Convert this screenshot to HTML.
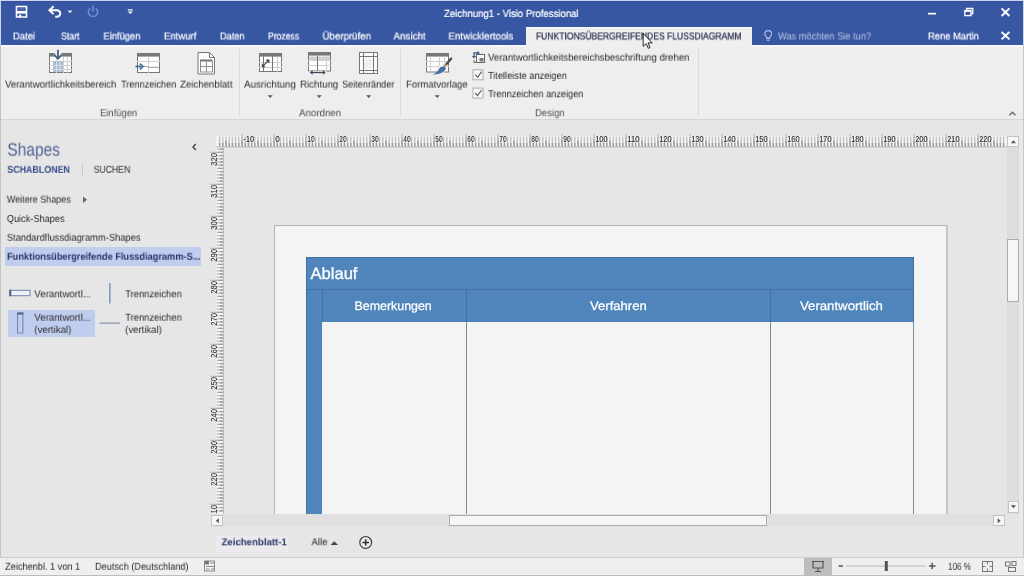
<!DOCTYPE html>
<html lang="de"><head><meta charset="utf-8"><title>Zeichnung1 - Visio Professional</title>
<style>
html,body{margin:0;padding:0}
body{width:1024px;height:576px;overflow:hidden;background:#e6e6e6;font-family:"Liberation Sans",sans-serif;position:relative}
.abs,.t,.b{position:absolute}
.t{white-space:nowrap;display:block;transform-origin:0 0;text-rendering:geometricPrecision;will-change:transform}
svg{display:block;overflow:visible}
</style></head>
<body>
<div class="b" style="left:0px;top:0px;width:1024px;height:45px;background:#3857a3;"></div>
<div class="b" style="left:0px;top:1px;width:1024px;height:1px;background:#3a4f9a;"></div>
<div class="b" style="left:0px;top:0px;width:1024px;height:1px;background:#cdd3f3;"></div>
<div class="b" style="left:0px;top:0px;width:1px;height:45px;background:#cdd3f3;"></div>
<div class="b" style="left:1023px;top:0px;width:1px;height:45px;background:#cdd3f3;"></div>
<div class="b" style="left:0px;top:45px;width:1024px;height:74px;background:#eeeeee;"></div>
<div class="b" style="left:0px;top:45px;width:1024px;height:1.5px;background:#f6f8fb;"></div>
<div class="b" style="left:0px;top:119px;width:1024px;height:1px;background:#d6d6d6;"></div>
<div class="b" style="left:526px;top:26.5px;width:226px;height:20.5px;background:#efefef;"></div>
<div class="b" style="left:526px;top:26.5px;width:226px;height:1px;background:#f7f8fb;"></div>
<div class="b" style="left:239px;top:49px;width:1px;height:66px;background:#d9d9d9;"></div>
<div class="b" style="left:400px;top:49px;width:1px;height:66px;background:#d9d9d9;"></div>
<div class="b" style="left:698px;top:49px;width:1px;height:66px;background:#d9d9d9;"></div>
<div class="b" style="left:0px;top:45px;width:1px;height:531px;background:#c4c4c4;"></div>
<div class="b" style="left:1023px;top:45px;width:1px;height:531px;background:#c8c8c8;"></div>
<div class="b" style="left:1019px;top:120px;width:4px;height:438px;background:#e9e9e9;"></div>
<div class="b" style="left:5px;top:247.3px;width:196px;height:18.7px;background:#c0cdee;"></div>
<div class="b" style="left:7.5px;top:310.4px;width:87.5px;height:26.2px;background:#c0cdee;"></div>
<div class="b" style="left:274px;top:225px;width:673.6px;height:289px;background:#c6c6c6;"></div>
<div class="b" style="left:273.5px;top:225px;width:672.6px;height:289px;background:#f4f4f4;border-left:1px solid #b6b6b6;border-top:1px solid #b2b2b2;box-sizing:border-box;"></div>
<div class="b" style="left:306px;top:257.4px;width:608px;height:64.8px;background:#4f85bb;"></div>
<div class="b" style="left:306px;top:257.4px;width:608px;height:1px;background:#45709d;"></div>
<div class="b" style="left:306px;top:289.2px;width:608px;height:1px;background:#45709d;"></div>
<div class="b" style="left:306px;top:322px;width:16px;height:192px;background:#4f85bb;"></div>
<div class="b" style="left:306px;top:257.4px;width:1px;height:256.6px;background:#45709d;"></div>
<div class="b" style="left:322px;top:290px;width:1px;height:31.7px;background:#45709d;"></div>
<div class="b" style="left:466px;top:290px;width:1px;height:31.7px;background:#45709d;"></div>
<div class="b" style="left:770px;top:290px;width:1px;height:31.7px;background:#45709d;"></div>
<div class="b" style="left:913px;top:257.4px;width:1px;height:64.3px;background:#45709d;"></div>
<div class="b" style="left:465.8px;top:322px;width:1.5px;height:192px;background:#808c98;"></div>
<div class="b" style="left:769.8px;top:322px;width:1.5px;height:192px;background:#808c98;"></div>
<div class="b" style="left:912.6px;top:322px;width:1.5px;height:192px;background:#808c98;"></div>
<div class="b" style="left:211px;top:514px;width:794px;height:13px;background:#e0e0e0;"></div>
<div class="b" style="left:449px;top:515px;width:318px;height:11px;background:#f6f6f6;border:1px solid #ababab;box-sizing:border-box;"></div>
<div class="b" style="left:211px;top:515px;width:12px;height:11px;background:#f6f6f6;border:1px solid #c4c4c4;box-sizing:border-box;"></div>
<div class="b" style="left:993px;top:515px;width:12px;height:11px;background:#f6f6f6;border:1px solid #c4c4c4;box-sizing:border-box;"></div>
<div class="b" style="left:1007px;top:147px;width:12px;height:367px;background:#dddddd;"></div>
<div class="b" style="left:1007px;top:239px;width:12px;height:63px;background:#f6f6f6;border:1px solid #ababab;box-sizing:border-box;"></div>
<div class="b" style="left:1007px;top:136px;width:12px;height:11px;background:#f8f8f8;border:1px solid #c4c4c4;box-sizing:border-box;"></div>
<div class="b" style="left:1008px;top:501px;width:11px;height:12px;background:#f6f6f6;border:1px solid #c4c4c4;box-sizing:border-box;"></div>
<div class="b" style="left:1px;top:527px;width:1018px;height:30px;background:#e6e6e6;"></div>
<div class="b" style="left:216px;top:536px;width:72px;height:15.5px;background:#ebebee;"></div>
<div class="b" style="left:0px;top:557px;width:1024px;height:1px;background:#cdcdcd;"></div>
<div class="b" style="left:0px;top:558px;width:1024px;height:18px;background:#efefef;"></div>
<div class="b" style="left:804px;top:558px;width:28px;height:18px;background:#bdbdbd;"></div>
<div class="b" style="left:0px;top:575px;width:1024px;height:1px;background:#bdbdbd;"></div>
<svg class="abs" style="left:0;top:0;overflow:hidden;will-change:transform" width="1024" height="514" viewBox="0 0 1024 514" font-family="Liberation Sans, sans-serif"><rect x="216" y="136" width="791" height="11" fill="#f4f4f4"/><rect x="216" y="147" width="7.5" height="367" fill="#f4f4f4"/><path d="M219.6 147v-10.5 M222.8 147v-10.5 M226.0 147v-10.5 M229.2 147v-10.5 M232.4 147v-10.5 M235.6 147v-10.5 M238.8 147v-10.5 M242.0 147v-10.5 M245.2 147v-10.5 M248.4 147v-10.5 M251.6 147v-10.5 M254.8 147v-10.5 M258.0 147v-10.5 M261.2 147v-10.5 M264.4 147v-10.5 M267.6 147v-10.5 M270.8 147v-10.5 M274.0 147v-10.5 M277.2 147v-10.5 M280.4 147v-10.5 M283.6 147v-10.5 M286.8 147v-10.5 M290.0 147v-10.5 M293.2 147v-10.5 M296.4 147v-10.5 M299.6 147v-10.5 M302.8 147v-10.5 M306.0 147v-10.5 M309.2 147v-10.5 M312.4 147v-10.5 M315.6 147v-10.5 M318.8 147v-10.5 M322.0 147v-10.5 M325.2 147v-10.5 M328.4 147v-10.5 M331.6 147v-10.5 M334.8 147v-10.5 M338.0 147v-10.5 M341.2 147v-10.5 M344.4 147v-10.5 M347.6 147v-10.5 M350.8 147v-10.5 M354.0 147v-10.5 M357.2 147v-10.5 M360.4 147v-10.5 M363.6 147v-10.5 M366.8 147v-10.5 M370.0 147v-10.5 M373.2 147v-10.5 M376.4 147v-10.5 M379.6 147v-10.5 M382.8 147v-10.5 M386.0 147v-10.5 M389.2 147v-10.5 M392.4 147v-10.5 M395.6 147v-10.5 M398.8 147v-10.5 M402.0 147v-10.5 M405.2 147v-10.5 M408.4 147v-10.5 M411.6 147v-10.5 M414.8 147v-10.5 M418.0 147v-10.5 M421.2 147v-10.5 M424.4 147v-10.5 M427.6 147v-10.5 M430.8 147v-10.5 M434.0 147v-10.5 M437.2 147v-10.5 M440.4 147v-10.5 M443.6 147v-10.5 M446.8 147v-10.5 M450.0 147v-10.5 M453.2 147v-10.5 M456.4 147v-10.5 M459.6 147v-10.5 M462.8 147v-10.5 M466.0 147v-10.5 M469.2 147v-10.5 M472.4 147v-10.5 M475.6 147v-10.5 M478.8 147v-10.5 M482.0 147v-10.5 M485.2 147v-10.5 M488.4 147v-10.5 M491.6 147v-10.5 M494.8 147v-10.5 M498.0 147v-10.5 M501.2 147v-10.5 M504.4 147v-10.5 M507.6 147v-10.5 M510.8 147v-10.5 M514.0 147v-10.5 M517.2 147v-10.5 M520.4 147v-10.5 M523.6 147v-10.5 M526.8 147v-10.5 M530.0 147v-10.5 M533.2 147v-10.5 M536.4 147v-10.5 M539.6 147v-10.5 M542.8 147v-10.5 M546.0 147v-10.5 M549.2 147v-10.5 M552.4 147v-10.5 M555.6 147v-10.5 M558.8 147v-10.5 M562.0 147v-10.5 M565.2 147v-10.5 M568.4 147v-10.5 M571.6 147v-10.5 M574.8 147v-10.5 M578.0 147v-10.5 M581.2 147v-10.5 M584.4 147v-10.5 M587.6 147v-10.5 M590.8 147v-10.5 M594.0 147v-10.5 M597.2 147v-10.5 M600.4 147v-10.5 M603.6 147v-10.5 M606.8 147v-10.5 M610.0 147v-10.5 M613.2 147v-10.5 M616.4 147v-10.5 M619.6 147v-10.5 M622.8 147v-10.5 M626.0 147v-10.5 M629.2 147v-10.5 M632.4 147v-10.5 M635.6 147v-10.5 M638.8 147v-10.5 M642.0 147v-10.5 M645.2 147v-10.5 M648.4 147v-10.5 M651.6 147v-10.5 M654.8 147v-10.5 M658.0 147v-10.5 M661.2 147v-10.5 M664.4 147v-10.5 M667.6 147v-10.5 M670.8 147v-10.5 M674.0 147v-10.5 M677.2 147v-10.5 M680.4 147v-10.5 M683.6 147v-10.5 M686.8 147v-10.5 M690.0 147v-10.5 M693.2 147v-10.5 M696.4 147v-10.5 M699.6 147v-10.5 M702.8 147v-10.5 M706.0 147v-10.5 M709.2 147v-10.5 M712.4 147v-10.5 M715.6 147v-10.5 M718.8 147v-10.5 M722.0 147v-10.5 M725.2 147v-10.5 M728.4 147v-10.5 M731.6 147v-10.5 M734.8 147v-10.5 M738.0 147v-10.5 M741.2 147v-10.5 M744.4 147v-10.5 M747.6 147v-10.5 M750.8 147v-10.5 M754.0 147v-10.5 M757.2 147v-10.5 M760.4 147v-10.5 M763.6 147v-10.5 M766.8 147v-10.5 M770.0 147v-10.5 M773.2 147v-10.5 M776.4 147v-10.5 M779.6 147v-10.5 M782.8 147v-10.5 M786.0 147v-10.5 M789.2 147v-10.5 M792.4 147v-10.5 M795.6 147v-10.5 M798.8 147v-10.5 M802.0 147v-10.5 M805.2 147v-10.5 M808.4 147v-10.5 M811.6 147v-10.5 M814.8 147v-10.5 M818.0 147v-10.5 M821.2 147v-10.5 M824.4 147v-10.5 M827.6 147v-10.5 M830.8 147v-10.5 M834.0 147v-10.5 M837.2 147v-10.5 M840.4 147v-10.5 M843.6 147v-10.5 M846.8 147v-10.5 M850.0 147v-10.5 M853.2 147v-10.5 M856.4 147v-10.5 M859.6 147v-10.5 M862.8 147v-10.5 M866.0 147v-10.5 M869.2 147v-10.5 M872.4 147v-10.5 M875.6 147v-10.5 M878.8 147v-10.5 M882.0 147v-10.5 M885.2 147v-10.5 M888.4 147v-10.5 M891.6 147v-10.5 M894.8 147v-10.5 M898.0 147v-10.5 M901.2 147v-10.5 M904.4 147v-10.5 M907.6 147v-10.5 M910.8 147v-10.5 M914.0 147v-10.5 M917.2 147v-10.5 M920.4 147v-10.5 M923.6 147v-10.5 M926.8 147v-10.5 M930.0 147v-10.5 M933.2 147v-10.5 M936.4 147v-10.5 M939.6 147v-10.5 M942.8 147v-10.5 M946.0 147v-10.5 M949.2 147v-10.5 M952.4 147v-10.5 M955.6 147v-10.5 M958.8 147v-10.5 M962.0 147v-10.5 M965.2 147v-10.5 M968.4 147v-10.5 M971.6 147v-10.5 M974.8 147v-10.5 M978.0 147v-10.5 M981.2 147v-10.5 M984.4 147v-10.5 M987.6 147v-10.5 M990.8 147v-10.5 M994.0 147v-10.5 M997.2 147v-10.5 M1000.4 147v-10.5 M1003.6 147v-10.5" stroke="#c4c4c4" stroke-width="1.4" fill="none"/><path d="M219.6 147v-4 M222.8 147v-4 M226.0 147v-6 M229.2 147v-4 M232.4 147v-4 M235.6 147v-4 M238.8 147v-4 M242.0 147v-6 M245.2 147v-4 M248.4 147v-4 M251.6 147v-4 M254.8 147v-4 M258.0 147v-6 M261.2 147v-4 M264.4 147v-4 M267.6 147v-4 M270.8 147v-4 M274.0 147v-6 M277.2 147v-4 M280.4 147v-4 M283.6 147v-4 M286.8 147v-4 M290.0 147v-6 M293.2 147v-4 M296.4 147v-4 M299.6 147v-4 M302.8 147v-4 M306.0 147v-6 M309.2 147v-4 M312.4 147v-4 M315.6 147v-4 M318.8 147v-4 M322.0 147v-6 M325.2 147v-4 M328.4 147v-4 M331.6 147v-4 M334.8 147v-4 M338.0 147v-6 M341.2 147v-4 M344.4 147v-4 M347.6 147v-4 M350.8 147v-4 M354.0 147v-6 M357.2 147v-4 M360.4 147v-4 M363.6 147v-4 M366.8 147v-4 M370.0 147v-6 M373.2 147v-4 M376.4 147v-4 M379.6 147v-4 M382.8 147v-4 M386.0 147v-6 M389.2 147v-4 M392.4 147v-4 M395.6 147v-4 M398.8 147v-4 M402.0 147v-6 M405.2 147v-4 M408.4 147v-4 M411.6 147v-4 M414.8 147v-4 M418.0 147v-6 M421.2 147v-4 M424.4 147v-4 M427.6 147v-4 M430.8 147v-4 M434.0 147v-6 M437.2 147v-4 M440.4 147v-4 M443.6 147v-4 M446.8 147v-4 M450.0 147v-6 M453.2 147v-4 M456.4 147v-4 M459.6 147v-4 M462.8 147v-4 M466.0 147v-6 M469.2 147v-4 M472.4 147v-4 M475.6 147v-4 M478.8 147v-4 M482.0 147v-6 M485.2 147v-4 M488.4 147v-4 M491.6 147v-4 M494.8 147v-4 M498.0 147v-6 M501.2 147v-4 M504.4 147v-4 M507.6 147v-4 M510.8 147v-4 M514.0 147v-6 M517.2 147v-4 M520.4 147v-4 M523.6 147v-4 M526.8 147v-4 M530.0 147v-6 M533.2 147v-4 M536.4 147v-4 M539.6 147v-4 M542.8 147v-4 M546.0 147v-6 M549.2 147v-4 M552.4 147v-4 M555.6 147v-4 M558.8 147v-4 M562.0 147v-6 M565.2 147v-4 M568.4 147v-4 M571.6 147v-4 M574.8 147v-4 M578.0 147v-6 M581.2 147v-4 M584.4 147v-4 M587.6 147v-4 M590.8 147v-4 M594.0 147v-6 M597.2 147v-4 M600.4 147v-4 M603.6 147v-4 M606.8 147v-4 M610.0 147v-6 M613.2 147v-4 M616.4 147v-4 M619.6 147v-4 M622.8 147v-4 M626.0 147v-6 M629.2 147v-4 M632.4 147v-4 M635.6 147v-4 M638.8 147v-4 M642.0 147v-6 M645.2 147v-4 M648.4 147v-4 M651.6 147v-4 M654.8 147v-4 M658.0 147v-6 M661.2 147v-4 M664.4 147v-4 M667.6 147v-4 M670.8 147v-4 M674.0 147v-6 M677.2 147v-4 M680.4 147v-4 M683.6 147v-4 M686.8 147v-4 M690.0 147v-6 M693.2 147v-4 M696.4 147v-4 M699.6 147v-4 M702.8 147v-4 M706.0 147v-6 M709.2 147v-4 M712.4 147v-4 M715.6 147v-4 M718.8 147v-4 M722.0 147v-6 M725.2 147v-4 M728.4 147v-4 M731.6 147v-4 M734.8 147v-4 M738.0 147v-6 M741.2 147v-4 M744.4 147v-4 M747.6 147v-4 M750.8 147v-4 M754.0 147v-6 M757.2 147v-4 M760.4 147v-4 M763.6 147v-4 M766.8 147v-4 M770.0 147v-6 M773.2 147v-4 M776.4 147v-4 M779.6 147v-4 M782.8 147v-4 M786.0 147v-6 M789.2 147v-4 M792.4 147v-4 M795.6 147v-4 M798.8 147v-4 M802.0 147v-6 M805.2 147v-4 M808.4 147v-4 M811.6 147v-4 M814.8 147v-4 M818.0 147v-6 M821.2 147v-4 M824.4 147v-4 M827.6 147v-4 M830.8 147v-4 M834.0 147v-6 M837.2 147v-4 M840.4 147v-4 M843.6 147v-4 M846.8 147v-4 M850.0 147v-6 M853.2 147v-4 M856.4 147v-4 M859.6 147v-4 M862.8 147v-4 M866.0 147v-6 M869.2 147v-4 M872.4 147v-4 M875.6 147v-4 M878.8 147v-4 M882.0 147v-6 M885.2 147v-4 M888.4 147v-4 M891.6 147v-4 M894.8 147v-4 M898.0 147v-6 M901.2 147v-4 M904.4 147v-4 M907.6 147v-4 M910.8 147v-4 M914.0 147v-6 M917.2 147v-4 M920.4 147v-4 M923.6 147v-4 M926.8 147v-4 M930.0 147v-6 M933.2 147v-4 M936.4 147v-4 M939.6 147v-4 M942.8 147v-4 M946.0 147v-6 M949.2 147v-4 M952.4 147v-4 M955.6 147v-4 M958.8 147v-4 M962.0 147v-6 M965.2 147v-4 M968.4 147v-4 M971.6 147v-4 M974.8 147v-4 M978.0 147v-6 M981.2 147v-4 M984.4 147v-4 M987.6 147v-4 M990.8 147v-4 M994.0 147v-6 M997.2 147v-4 M1000.4 147v-4 M1003.6 147v-4" stroke="#9c9c9c" stroke-width="1.4" fill="none"/><path d="M242.0 147v-12.5 M274.0 147v-12.5 M306.0 147v-12.5 M338.0 147v-12.5 M370.0 147v-12.5 M402.0 147v-12.5 M434.0 147v-12.5 M466.0 147v-12.5 M498.0 147v-12.5 M530.0 147v-12.5 M562.0 147v-12.5 M594.0 147v-12.5 M626.0 147v-12.5 M658.0 147v-12.5 M690.0 147v-12.5 M722.0 147v-12.5 M754.0 147v-12.5 M786.0 147v-12.5 M818.0 147v-12.5 M850.0 147v-12.5 M882.0 147v-12.5 M914.0 147v-12.5 M946.0 147v-12.5 M978.0 147v-12.5" stroke="#a4a4a4" stroke-width="1.2" fill="none" opacity=".7"/><path d="M223.5 149.2h-7 M223.5 152.4h-7 M223.5 155.6h-7 M223.5 158.8h-7 M223.5 162.0h-7 M223.5 165.2h-7 M223.5 168.4h-7 M223.5 171.6h-7 M223.5 174.8h-7 M223.5 178.0h-7 M223.5 181.2h-7 M223.5 184.4h-7 M223.5 187.6h-7 M223.5 190.8h-7 M223.5 194.0h-7 M223.5 197.2h-7 M223.5 200.4h-7 M223.5 203.6h-7 M223.5 206.8h-7 M223.5 210.0h-7 M223.5 213.2h-7 M223.5 216.4h-7 M223.5 219.6h-7 M223.5 222.8h-7 M223.5 226.0h-7 M223.5 229.2h-7 M223.5 232.4h-7 M223.5 235.6h-7 M223.5 238.8h-7 M223.5 242.0h-7 M223.5 245.2h-7 M223.5 248.4h-7 M223.5 251.6h-7 M223.5 254.8h-7 M223.5 258.0h-7 M223.5 261.2h-7 M223.5 264.4h-7 M223.5 267.6h-7 M223.5 270.8h-7 M223.5 274.0h-7 M223.5 277.2h-7 M223.5 280.4h-7 M223.5 283.6h-7 M223.5 286.8h-7 M223.5 290.0h-7 M223.5 293.2h-7 M223.5 296.4h-7 M223.5 299.6h-7 M223.5 302.8h-7 M223.5 306.0h-7 M223.5 309.2h-7 M223.5 312.4h-7 M223.5 315.6h-7 M223.5 318.8h-7 M223.5 322.0h-7 M223.5 325.2h-7 M223.5 328.4h-7 M223.5 331.6h-7 M223.5 334.8h-7 M223.5 338.0h-7 M223.5 341.2h-7 M223.5 344.4h-7 M223.5 347.6h-7 M223.5 350.8h-7 M223.5 354.0h-7 M223.5 357.2h-7 M223.5 360.4h-7 M223.5 363.6h-7 M223.5 366.8h-7 M223.5 370.0h-7 M223.5 373.2h-7 M223.5 376.4h-7 M223.5 379.6h-7 M223.5 382.8h-7 M223.5 386.0h-7 M223.5 389.2h-7 M223.5 392.4h-7 M223.5 395.6h-7 M223.5 398.8h-7 M223.5 402.0h-7 M223.5 405.2h-7 M223.5 408.4h-7 M223.5 411.6h-7 M223.5 414.8h-7 M223.5 418.0h-7 M223.5 421.2h-7 M223.5 424.4h-7 M223.5 427.6h-7 M223.5 430.8h-7 M223.5 434.0h-7 M223.5 437.2h-7 M223.5 440.4h-7 M223.5 443.6h-7 M223.5 446.8h-7 M223.5 450.0h-7 M223.5 453.2h-7 M223.5 456.4h-7 M223.5 459.6h-7 M223.5 462.8h-7 M223.5 466.0h-7 M223.5 469.2h-7 M223.5 472.4h-7 M223.5 475.6h-7 M223.5 478.8h-7 M223.5 482.0h-7 M223.5 485.2h-7 M223.5 488.4h-7 M223.5 491.6h-7 M223.5 494.8h-7 M223.5 498.0h-7 M223.5 501.2h-7 M223.5 504.4h-7 M223.5 507.6h-7 M223.5 510.8h-7" stroke="#c4c4c4" stroke-width="1.4" fill="none"/><path d="M223.5 149.2h-3.5 M223.5 152.4h-5 M223.5 155.6h-3.5 M223.5 158.8h-3.5 M223.5 162.0h-3.5 M223.5 165.2h-3.5 M223.5 168.4h-5 M223.5 171.6h-3.5 M223.5 174.8h-3.5 M223.5 178.0h-3.5 M223.5 181.2h-3.5 M223.5 184.4h-5 M223.5 187.6h-3.5 M223.5 190.8h-3.5 M223.5 194.0h-3.5 M223.5 197.2h-3.5 M223.5 200.4h-5 M223.5 203.6h-3.5 M223.5 206.8h-3.5 M223.5 210.0h-3.5 M223.5 213.2h-3.5 M223.5 216.4h-5 M223.5 219.6h-3.5 M223.5 222.8h-3.5 M223.5 226.0h-3.5 M223.5 229.2h-3.5 M223.5 232.4h-5 M223.5 235.6h-3.5 M223.5 238.8h-3.5 M223.5 242.0h-3.5 M223.5 245.2h-3.5 M223.5 248.4h-5 M223.5 251.6h-3.5 M223.5 254.8h-3.5 M223.5 258.0h-3.5 M223.5 261.2h-3.5 M223.5 264.4h-5 M223.5 267.6h-3.5 M223.5 270.8h-3.5 M223.5 274.0h-3.5 M223.5 277.2h-3.5 M223.5 280.4h-5 M223.5 283.6h-3.5 M223.5 286.8h-3.5 M223.5 290.0h-3.5 M223.5 293.2h-3.5 M223.5 296.4h-5 M223.5 299.6h-3.5 M223.5 302.8h-3.5 M223.5 306.0h-3.5 M223.5 309.2h-3.5 M223.5 312.4h-5 M223.5 315.6h-3.5 M223.5 318.8h-3.5 M223.5 322.0h-3.5 M223.5 325.2h-3.5 M223.5 328.4h-5 M223.5 331.6h-3.5 M223.5 334.8h-3.5 M223.5 338.0h-3.5 M223.5 341.2h-3.5 M223.5 344.4h-5 M223.5 347.6h-3.5 M223.5 350.8h-3.5 M223.5 354.0h-3.5 M223.5 357.2h-3.5 M223.5 360.4h-5 M223.5 363.6h-3.5 M223.5 366.8h-3.5 M223.5 370.0h-3.5 M223.5 373.2h-3.5 M223.5 376.4h-5 M223.5 379.6h-3.5 M223.5 382.8h-3.5 M223.5 386.0h-3.5 M223.5 389.2h-3.5 M223.5 392.4h-5 M223.5 395.6h-3.5 M223.5 398.8h-3.5 M223.5 402.0h-3.5 M223.5 405.2h-3.5 M223.5 408.4h-5 M223.5 411.6h-3.5 M223.5 414.8h-3.5 M223.5 418.0h-3.5 M223.5 421.2h-3.5 M223.5 424.4h-5 M223.5 427.6h-3.5 M223.5 430.8h-3.5 M223.5 434.0h-3.5 M223.5 437.2h-3.5 M223.5 440.4h-5 M223.5 443.6h-3.5 M223.5 446.8h-3.5 M223.5 450.0h-3.5 M223.5 453.2h-3.5 M223.5 456.4h-5 M223.5 459.6h-3.5 M223.5 462.8h-3.5 M223.5 466.0h-3.5 M223.5 469.2h-3.5 M223.5 472.4h-5 M223.5 475.6h-3.5 M223.5 478.8h-3.5 M223.5 482.0h-3.5 M223.5 485.2h-3.5 M223.5 488.4h-5 M223.5 491.6h-3.5 M223.5 494.8h-3.5 M223.5 498.0h-3.5 M223.5 501.2h-3.5 M223.5 504.4h-5 M223.5 507.6h-3.5 M223.5 510.8h-3.5" stroke="#9c9c9c" stroke-width="1.4" fill="none"/><path d="M223.5 152.4h-13 M223.5 184.4h-13 M223.5 216.4h-13 M223.5 248.4h-13 M223.5 280.4h-13 M223.5 312.4h-13 M223.5 344.4h-13 M223.5 376.4h-13 M223.5 408.4h-13 M223.5 440.4h-13 M223.5 472.4h-13 M223.5 504.4h-13" stroke="#a4a4a4" stroke-width="1.2" fill="none" opacity=".7"/><rect x="216" y="146.500" width="791" height="1" fill="#bcbcbc"/><rect x="223" y="147" width="1" height="367" fill="#bcbcbc"/><text x="243.2" y="142" font-size="8.6" fill="#262626" textLength="11.2" lengthAdjust="spacingAndGlyphs">-10</text><text x="275.2" y="142" font-size="8.6" fill="#262626" textLength="4.6" lengthAdjust="spacingAndGlyphs">0</text><text x="307.2" y="142" font-size="8.6" fill="#262626" textLength="7.4" lengthAdjust="spacingAndGlyphs">10</text><text x="339.2" y="142" font-size="8.6" fill="#262626" textLength="7.4" lengthAdjust="spacingAndGlyphs">20</text><text x="371.2" y="142" font-size="8.6" fill="#262626" textLength="7.4" lengthAdjust="spacingAndGlyphs">30</text><text x="403.2" y="142" font-size="8.6" fill="#262626" textLength="7.4" lengthAdjust="spacingAndGlyphs">40</text><text x="435.2" y="142" font-size="8.6" fill="#262626" textLength="7.4" lengthAdjust="spacingAndGlyphs">50</text><text x="467.2" y="142" font-size="8.6" fill="#262626" textLength="7.4" lengthAdjust="spacingAndGlyphs">60</text><text x="499.2" y="142" font-size="8.6" fill="#262626" textLength="7.4" lengthAdjust="spacingAndGlyphs">70</text><text x="531.2" y="142" font-size="8.6" fill="#262626" textLength="7.4" lengthAdjust="spacingAndGlyphs">80</text><text x="563.2" y="142" font-size="8.6" fill="#262626" textLength="7.4" lengthAdjust="spacingAndGlyphs">90</text><text x="595.2" y="142" font-size="8.6" fill="#262626" textLength="12.4" lengthAdjust="spacingAndGlyphs">100</text><text x="627.2" y="142" font-size="8.6" fill="#262626" textLength="12.4" lengthAdjust="spacingAndGlyphs">110</text><text x="659.2" y="142" font-size="8.6" fill="#262626" textLength="12.4" lengthAdjust="spacingAndGlyphs">120</text><text x="691.2" y="142" font-size="8.6" fill="#262626" textLength="12.4" lengthAdjust="spacingAndGlyphs">130</text><text x="723.2" y="142" font-size="8.6" fill="#262626" textLength="12.4" lengthAdjust="spacingAndGlyphs">140</text><text x="755.2" y="142" font-size="8.6" fill="#262626" textLength="12.4" lengthAdjust="spacingAndGlyphs">150</text><text x="787.2" y="142" font-size="8.6" fill="#262626" textLength="12.4" lengthAdjust="spacingAndGlyphs">160</text><text x="819.2" y="142" font-size="8.6" fill="#262626" textLength="12.4" lengthAdjust="spacingAndGlyphs">170</text><text x="851.2" y="142" font-size="8.6" fill="#262626" textLength="12.4" lengthAdjust="spacingAndGlyphs">180</text><text x="883.2" y="142" font-size="8.6" fill="#262626" textLength="12.4" lengthAdjust="spacingAndGlyphs">190</text><text x="915.2" y="142" font-size="8.6" fill="#262626" textLength="12.4" lengthAdjust="spacingAndGlyphs">200</text><text x="947.2" y="142" font-size="8.6" fill="#262626" textLength="12.4" lengthAdjust="spacingAndGlyphs">210</text><text x="979.2" y="142" font-size="8.6" fill="#262626" textLength="12.4" lengthAdjust="spacingAndGlyphs">220</text><text transform="translate(216.900 165.7) rotate(-90)" font-size="8.6" fill="#262626" textLength="12.800" lengthAdjust="spacingAndGlyphs">320</text><text transform="translate(216.900 197.7) rotate(-90)" font-size="8.6" fill="#262626" textLength="12.800" lengthAdjust="spacingAndGlyphs">310</text><text transform="translate(216.900 229.7) rotate(-90)" font-size="8.6" fill="#262626" textLength="12.800" lengthAdjust="spacingAndGlyphs">300</text><text transform="translate(216.900 261.7) rotate(-90)" font-size="8.6" fill="#262626" textLength="12.800" lengthAdjust="spacingAndGlyphs">290</text><text transform="translate(216.900 293.7) rotate(-90)" font-size="8.6" fill="#262626" textLength="12.800" lengthAdjust="spacingAndGlyphs">280</text><text transform="translate(216.900 325.7) rotate(-90)" font-size="8.6" fill="#262626" textLength="12.800" lengthAdjust="spacingAndGlyphs">270</text><text transform="translate(216.900 357.7) rotate(-90)" font-size="8.6" fill="#262626" textLength="12.800" lengthAdjust="spacingAndGlyphs">260</text><text transform="translate(216.900 389.7) rotate(-90)" font-size="8.6" fill="#262626" textLength="12.800" lengthAdjust="spacingAndGlyphs">250</text><text transform="translate(216.900 421.7) rotate(-90)" font-size="8.6" fill="#262626" textLength="12.800" lengthAdjust="spacingAndGlyphs">240</text><text transform="translate(216.900 453.7) rotate(-90)" font-size="8.6" fill="#262626" textLength="12.800" lengthAdjust="spacingAndGlyphs">230</text><text transform="translate(216.900 485.7) rotate(-90)" font-size="8.6" fill="#262626" textLength="12.800" lengthAdjust="spacingAndGlyphs">220</text><text transform="translate(216.900 517.7) rotate(-90)" font-size="8.6" fill="#262626" textLength="12.800" lengthAdjust="spacingAndGlyphs">210</text></svg>
<svg class="abs" style="left:0;top:0" width="1024" height="576" viewBox="0 0 1024 576">
<path d="M16.5 6.5h10v10.5h-10z" fill="none" stroke="#ffffff" stroke-width="1.6"/>
<rect x="18.600" y="7.300" width="5.800" height="3.200" fill="#ffffff" opacity=".12"/>
<rect x="16.5" y="11" width="10" height="2.6" fill="#ffffff"/>
<rect x="19" y="14.6" width="2.2" height="2.4" fill="#ffffff"/>
<path d="M50 10.2h7.2a4 3.4 0 0 1 0 6.6h-2" fill="none" stroke="#ffffff" stroke-width="1.9"/>
<path d="M53.6 6.3l-4.2 3.9 4.2 3.9" fill="none" stroke="#ffffff" stroke-width="1.9"/>
<path d="M67.5 10.6h5l-2.5 2.6z" fill="#ffffff" opacity=".85"/>
<path d="M90.2 8.2a4.6 4.6 0 1 0 5.6 0" fill="none" stroke="#6f8ad0" stroke-width="1.6"/>
<path d="M93 5.5v6" fill="none" stroke="#6f8ad0" stroke-width="1.6"/>
<rect x="127.800" y="9.300" width="5" height="1.200" fill="#ffffff"/>
<path d="M127.800 11.400h5l-2.500 2.600z" fill="#ffffff"/>
<rect x="928" y="12.8" width="8" height="1.7" fill="#ffffff"/>
<path d="M966.6 10.4v-1.9h6.2v5.2h-1.8" fill="none" stroke="#ffffff" stroke-width="1.3"/>
<rect x="964.8" y="10.6" width="6.2" height="5" fill="none" stroke="#ffffff" stroke-width="1.3"/>
<rect x="964.8" y="10.4" width="6.2" height="1.4" fill="#ffffff"/>
<path d="M1001.6 8.4l7.8 7.6M1009.4 8.4l-7.8 7.6" stroke="#ffffff" stroke-width="1.9" fill="none"/>
<path d="M1001.6 32l7.8 7.4M1009.4 32l-7.8 7.4" stroke="#ffffff" stroke-width="1.9" fill="none"/>
<path d="M766.8 38.4v-1.300c-1.400-.9-2-1.900-2-3.200a3.400 3.300 0 0 1 6.800 0c0 1.300-.6 2.300-2 3.200v1.300z" fill="none" stroke="#b4c1e6" stroke-width="1.100"/>
<path d="M766.700 40.200h3" stroke="#b4c1e6" stroke-width="1.100"/>
<rect x="49.5" y="53.5" width="22" height="19" fill="#fdfdfd" stroke="#777777" stroke-width="1"/><rect x="49" y="53" width="23" height="3.6" fill="#777777"/><path d="M56.5 56.6v16.4M63.5 56.6v16.4M67.5 56.6v16.4M49 61.5h23M49 65.5h23M49 69.5h23" stroke="#cfcfcf" stroke-width="1" fill="none"/>
<rect x="53" y="61" width="10" height="11" fill="#acbccf"/>
<path d="M53 65.500h10M53 69.500h10M56.500 61v11M60 61v11" stroke="#dde4ee" stroke-width=".8"/>
<rect x="54.800" y="52" width="6.600" height="5.500" fill="#eeeeee"/>
<path d="M58 49.800v8" stroke="#3d5a78" stroke-width="1.700"/>
<path d="M54.600 55.200l3.400 3.600 3.400-3.600" stroke="#3d5a78" stroke-width="1.700" fill="none"/>
<rect x="137.5" y="53.5" width="22" height="19" fill="#fdfdfd" stroke="#777777" stroke-width="1"/><rect x="137" y="53" width="23" height="3.6" fill="#777777"/><path d="M148.5 56.6v16.4M137 61.5h23" stroke="#cfcfcf" stroke-width="1" fill="none"/>
<path d="M143 66.300h3.500c1.200 0 1.200 1 2.400 1h10.600" stroke="#8c8c8c" stroke-width=".9" fill="none"/>
<path d="M135.500 66.500h6" stroke="#3f6a9a" stroke-width="1.800"/>
<path d="M139.800 63.600l3.200 2.900-3.200 2.900" stroke="#3f6a9a" stroke-width="1.600" fill="none"/>
<path d="M198 52.500h11.500l5 5v16.500h-16.500z" fill="#fdfdfd" stroke="#777777" stroke-width="1"/>
<path d="M209.500 52.500v5h5" fill="none" stroke="#777777" stroke-width="1"/>
<rect x="200" y="59.500" width="12.500" height="2" fill="#777777"/>
<path d="M200.500 61v11h12v-11M200.500 66.500h12M206.500 61.500v10.500" fill="none" stroke="#8f8f8f" stroke-width="1"/>
<rect x="259.5" y="53.5" width="22" height="18" fill="#fdfdfd" stroke="#777777" stroke-width="1"/><rect x="259" y="53" width="23" height="3.6" fill="#777777"/><path d="M263.5 56.6v15.4M272.5 56.6v15.4M277.5 56.6v15.4M259 62.5h23M259 67.5h23" stroke="#cfcfcf" stroke-width="1" fill="none"/>
<path d="M263.500 56v16M272.500 56v16" stroke="#777777" stroke-width="1"/>
<path d="M262.600 66.400l6-6" stroke="#3c4a5c" stroke-width="1.300"/>
<path d="M266 59.800h3.200v3.200zM262 63.800v3.200h3.200z" fill="#3c4a5c" stroke="#3c4a5c" stroke-width=".5"/>
<rect x="308.5" y="52.5" width="22" height="18.5" fill="#fdfdfd" stroke="#777777" stroke-width="1"/><rect x="308" y="52" width="23" height="3.6" fill="#777777"/><path d="M317.5 55.6v15.9M326.5 55.6v15.9M308 60.5h23M308 65.5h23" stroke="#cfcfcf" stroke-width="1" fill="none"/>
<rect x="309" y="56.500" width="21" height="4" fill="#d0d0d0"/>
<path d="M317.500 55.600v16" stroke="#777777" stroke-width="1"/>
<rect x="309" y="71" width="17" height="3.600" fill="#eeeeee"/>
<path d="M310.500 72.500h14.500" stroke="#3c4a5c" stroke-width="1.300"/>
<path d="M312.600 70.200l-2.800 2.300 2.800 2.300zM322.900 70.200l2.800 2.300-2.800 2.300z" fill="#3c4a5c"/>
<rect x="359.500" y="52.500" width="18" height="21" fill="#fbfbfd" stroke="#777777" stroke-width="1"/>
<path d="M363.500 52.500v21M373.500 52.500v21M359.500 56.500h18M359.500 70.500h18" stroke="#777777" stroke-width="1" fill="none"/>
<path d="M366.500 57v13M370 57v13M364 60.500h9M364 64h9M364 67h9" stroke="#dfe3ee" stroke-width=".8" fill="none"/>
<rect x="426.5" y="53.5" width="22" height="18.5" fill="#fdfdfd" stroke="#777777" stroke-width="1"/><rect x="426" y="53" width="23" height="3.6" fill="#777777"/><path d="M430.5 56.6v15.9M439.5 56.6v15.9M444.5 56.6v15.9M426 61.5h23M426 66.5h23" stroke="#cfcfcf" stroke-width="1" fill="none"/>
<path d="M436 69l8-6.500 3.500 3.500-5 9z" fill="#eeeeee"/>
<path d="M451.200 58.600l-7 8.200" stroke="#4a4a4a" stroke-width="2.300" stroke-linecap="round"/>
<path d="M446 64.800l-1.800 2.200" stroke="#c9a27e" stroke-width="2.600"/>
<path d="M443.600 66.400l2.400 2.400c-2 3.600-6.500 6-13.500 5.600 3.500-1 5.500-3 7.600-7.200z" fill="#44709d"/>
<path d="M267.7 95.200h5l-2.500 2.800z" fill="#555"/>
<path d="M316.7 95.200h5l-2.500 2.800z" fill="#555"/>
<path d="M366.2 95.200h5l-2.500 2.800z" fill="#555"/>
<path d="M434.7 95.200h5l-2.500 2.800z" fill="#555"/>
<rect x="476.500" y="54.500" width="8" height="8" fill="#fafafa" stroke="#666" stroke-width="1"/>
<rect x="479.500" y="58" width="4" height="3.500" fill="#777"/>
<path d="M474 56.500v-3.500h4.500" fill="none" stroke="#3f5f86" stroke-width="1.300"/>
<path d="M477.500 50.800l2.400 2.200-2.400 2.200zM471.800 56l2.200 2.400 2.200-2.400z" fill="#3f5f86"/>
<path d="M474 60v2.500h2" fill="none" stroke="#666" stroke-width="1"/>
<rect x="473" y="69.8" width="10" height="10" fill="#f8f8f8" stroke="#ababab" stroke-width="1"/>
<path d="M475.300 74.7l2.300 2.600 4-5.600" fill="none" stroke="#5e5e5e" stroke-width="1.200"/>
<rect x="473" y="88.1" width="10" height="10" fill="#f8f8f8" stroke="#ababab" stroke-width="1"/>
<path d="M475.300 93.0l2.300 2.600 4-5.600" fill="none" stroke="#5e5e5e" stroke-width="1.200"/>
<path d="M1009.500 115.200l3-3 3 3" fill="none" stroke="#666" stroke-width="1.300"/>
<path d="M195.800 144l-2.800 3 2.800 3" fill="none" stroke="#444" stroke-width="1.400"/>
<rect x="82" y="164" width="1" height="12" fill="#c8c8c8"/>
<path d="M83 196.500l4 3.200-4 3.200z" fill="#666"/>
<rect x="9.500" y="290.300" width="20.500" height="5.400" fill="#edf0f5" stroke="#6f86a6" stroke-width="1"/>
<rect x="9" y="289.800" width="2.400" height="6.400" fill="#566f90"/>
<rect x="109.200" y="283" width="1.300" height="20.500" fill="#6b8cb3"/>
<rect x="17.500" y="313" width="5.400" height="20" fill="#c0cdee" stroke="#6f86a6" stroke-width="1"/>
<rect x="17" y="312.500" width="6.400" height="2.200" fill="#566f90"/>
<rect x="99.500" y="322.600" width="20.500" height="1" fill="#7188a8"/>
<path d="M218.800 518.200v5l-3-2.500z" fill="#555"/>
<path d="M997.600 518.200v5l3-2.500z" fill="#555"/>
<path d="M1010.800 143.200h5.200l-2.600-3z" fill="#555"/>
<path d="M1010.800 505.200h5.200l-2.600 3z" fill="#555"/>
<path d="M330.600 545h7.400l-3.700-3.800z" fill="#444"/>
<circle cx="365.700" cy="542.400" r="5.900" fill="#ebebeb" stroke="#3c3c3c" stroke-width="1.200"/>
<path d="M362.500 542.400h6.400M365.700 539.200v6.400" stroke="#2e2e2e" stroke-width="1.500"/>
<rect x="204.500" y="561" width="10" height="10" fill="#f6f6f6" stroke="#8a8a8a" stroke-width="1"/>
<rect x="205" y="561" width="4" height="3.500" fill="#777"/><path d="M210 563h4M206 566.500h8M206 569h3.500M211 569h3" stroke="#8a8a8a" stroke-width="1"/>
<path d="M812 561.500h12M813 561.500v6.500h10v-6.500M818 568v3M815 571.500h6" fill="none" stroke="#555" stroke-width="1.200"/>
<rect x="838.500" y="565.300" width="4.500" height="1.500" fill="#555"/>
<rect x="846" y="565.500" width="80" height="1" fill="#b5b5b5"/>
<rect x="884.800" y="561" width="3" height="10" fill="#555"/>
<path d="M929 566h6.500M932.200 562.800v6.500" stroke="#555" stroke-width="1.500"/>
<rect x="982.500" y="561.500" width="10" height="10" fill="none" stroke="#777" stroke-width="1"/>
<path d="M987.500 561.500v3M987.500 568.500v3M982.500 566.500h3M989.500 566.500h3" stroke="#777" stroke-width="1"/>
<rect x="1005.500" y="562" width="4.500" height="4" fill="none" stroke="#777" stroke-width="1"/><rect x="1012" y="561.500" width="4" height="4" fill="none" stroke="#777" stroke-width="1"/><rect x="1008.500" y="567.500" width="7" height="4" fill="none" stroke="#777" stroke-width="1"/>
</svg>
<span class="t" id="t0" style="left:444px;top:8px;font-size:10.3px;line-height:14px;color:#ffffff;transform:translate(0.00px,0.00px) scaleX(0.9306);-webkit-text-stroke:0.2px #fff;">Zeichnung1 - Visio Professional</span>
<span class="t" id="t1" style="left:13px;top:30px;font-size:10.1px;line-height:14px;color:#ffffff;transform:translate(0.00px,0.50px) scaleX(0.9348);-webkit-text-stroke:0.2px #fff;">Datei</span>
<span class="t" id="t2" style="left:61px;top:30px;font-size:10.1px;line-height:14px;color:#ffffff;transform:translate(0.00px,0.50px) scaleX(0.8636);-webkit-text-stroke:0.2px #fff;">Start</span>
<span class="t" id="t3" style="left:103px;top:30px;font-size:10.1px;line-height:14px;color:#ffffff;transform:translate(0.50px,0.50px) scaleX(0.9250);-webkit-text-stroke:0.2px #fff;">Einfügen</span>
<span class="t" id="t4" style="left:164px;top:30px;font-size:10.1px;line-height:14px;color:#ffffff;transform:translate(0.00px,0.50px) scaleX(0.9429);-webkit-text-stroke:0.2px #fff;">Entwurf</span>
<span class="t" id="t5" style="left:220px;top:30px;font-size:10.1px;line-height:14px;color:#ffffff;transform:translate(0.00px,0.50px) scaleX(0.9074);-webkit-text-stroke:0.2px #fff;">Daten</span>
<span class="t" id="t6" style="left:268px;top:30px;font-size:10.1px;line-height:14px;color:#ffffff;transform:translate(0.00px,0.50px) scaleX(0.8514);-webkit-text-stroke:0.2px #fff;">Prozess</span>
<span class="t" id="t7" style="left:322px;top:30px;font-size:10.1px;line-height:14px;color:#ffffff;transform:translate(0.50px,0.50px) scaleX(0.9600);-webkit-text-stroke:0.2px #fff;">Überprüfen</span>
<span class="t" id="t8" style="left:393px;top:30px;font-size:10.1px;line-height:14px;color:#ffffff;transform:translate(0.50px,0.50px) scaleX(0.9697);-webkit-text-stroke:0.2px #fff;">Ansicht</span>
<span class="t" id="t9" style="left:448px;top:30px;font-size:10.1px;line-height:14px;color:#ffffff;transform:translate(0.50px,0.50px) scaleX(0.9627);-webkit-text-stroke:0.2px #fff;">Entwicklertools</span>
<span class="t" id="t10" style="left:536px;top:30px;font-size:10px;line-height:13px;color:#252b4d;transform:translate(0.00px,0.40px) scaleX(0.8542);-webkit-text-stroke:0.25px #252b4d;">FUNKTIONSÜBERGREIFENDES FLUSSDIAGRAMM</span>
<span class="t" id="t11" style="left:778px;top:30px;font-size:10.1px;line-height:14px;color:#b9c4e4;transform:translate(0.00px,0.50px) scaleX(0.9208);">Was möchten Sie tun?</span>
<span class="t" id="t12" style="left:928px;top:30px;font-size:10.1px;line-height:14px;color:#ffffff;transform:translate(0.00px,0.50px) scaleX(0.9273);-webkit-text-stroke:0.2px #fff;">Rene Martin</span>
<span class="t" id="t13" style="left:5px;top:78px;font-size:10.2px;line-height:14px;color:#2b2b2b;transform:translate(0.00px,0.60px) scaleX(0.9407);">Verantwortlichkeitsbereich</span>
<span class="t" id="t14" style="left:121px;top:78px;font-size:10.2px;line-height:14px;color:#2b2b2b;transform:translate(0.00px,0.60px) scaleX(0.9016);">Trennzeichen</span>
<span class="t" id="t15" style="left:180px;top:78px;font-size:10.2px;line-height:14px;color:#2b2b2b;transform:translate(0.00px,0.60px) scaleX(0.9464);">Zeichenblatt</span>
<span class="t" id="t16" style="left:100px;top:107px;font-size:10.2px;line-height:14px;color:#505050;transform:translate(0.00px,0.20px) scaleX(0.9250);">Einfügen</span>
<span class="t" id="t17" style="left:244px;top:78px;font-size:10.2px;line-height:14px;color:#2b2b2b;transform:translate(0.00px,0.60px) scaleX(0.9630);">Ausrichtung</span>
<span class="t" id="t18" style="left:300px;top:78px;font-size:10.2px;line-height:14px;color:#2b2b2b;transform:translate(0.00px,0.60px) scaleX(0.9500);">Richtung</span>
<span class="t" id="t19" style="left:342px;top:78px;font-size:10.2px;line-height:14px;color:#2b2b2b;transform:translate(0.00px,0.60px) scaleX(0.8983);">Seitenränder</span>
<span class="t" id="t20" style="left:299px;top:107px;font-size:10.2px;line-height:14px;color:#505050;transform:translate(0.00px,0.20px) scaleX(0.9545);">Anordnen</span>
<span class="t" id="t21" style="left:406px;top:78px;font-size:10.2px;line-height:14px;color:#2b2b2b;transform:translate(0.00px,0.60px) scaleX(0.9394);">Formatvorlage</span>
<span class="t" id="t22" style="left:488px;top:51px;font-size:10.2px;line-height:14px;color:#2b2b2b;transform:translate(0.00px,0.65px) scaleX(0.9437);">Verantwortlichkeitsbereichsbeschriftung drehen</span>
<span class="t" id="t23" style="left:488px;top:69px;font-size:10.2px;line-height:14px;color:#2b2b2b;transform:translate(0.00px,0.90px) scaleX(0.9080);">Titelleiste anzeigen</span>
<span class="t" id="t24" style="left:488px;top:88px;font-size:10.2px;line-height:14px;color:#2b2b2b;transform:translate(0.00px,0.20px) scaleX(0.9048);">Trennzeichen anzeigen</span>
<span class="t" id="t25" style="left:535px;top:107px;font-size:10.2px;line-height:14px;color:#505050;transform:translate(0.00px,0.20px) scaleX(0.9355);">Design</span>
<span class="t" id="t26" style="left:7px;top:137px;font-size:18px;line-height:24px;color:#546399;transform:translate(0.30px,0.60px) scaleX(0.8639);">Shapes</span>
<span class="t" id="t27" style="left:7px;top:163px;font-size:10px;line-height:13px;color:#33498a;font-weight:700;transform:translate(0.30px,0.80px) scaleX(0.8871);">SCHABLONEN</span>
<span class="t" id="t28" style="left:93px;top:163px;font-size:10.2px;line-height:14px;color:#2b2b2b;transform:translate(0.60px,0.80px) scaleX(0.8535);">SUCHEN</span>
<span class="t" id="t29" style="left:6px;top:193px;font-size:10.2px;line-height:14px;color:#2b2b2b;transform:translate(0.80px,0.65px) scaleX(0.8847);">Weitere Shapes</span>
<span class="t" id="t30" style="left:6px;top:213px;font-size:10.2px;line-height:14px;color:#2b2b2b;transform:translate(0.80px,0.00px) scaleX(0.9016);">Quick-Shapes</span>
<span class="t" id="t31" style="left:6px;top:231px;font-size:10.2px;line-height:14px;color:#2b2b2b;transform:translate(0.80px,0.80px) scaleX(0.9192);">Standardflussdiagramm-Shapes</span>
<span class="t" id="t32" style="left:7px;top:250px;font-size:10px;line-height:13px;color:#27356a;font-weight:700;transform:translate(0.00px,0.75px) scaleX(0.9234);">Funktionsübergreifende Flussdiagramm-S...</span>
<span class="t" id="t33" style="left:34px;top:288px;font-size:10.2px;line-height:14px;color:#2b2b2b;transform:translate(0.30px,0.30px) scaleX(0.9525);">Verantwortl...</span>
<span class="t" id="t34" style="left:125px;top:288px;font-size:10.2px;line-height:14px;color:#2b2b2b;transform:translate(0.20px,0.30px) scaleX(0.9213);">Trennzeichen</span>
<span class="t" id="t35" style="left:34px;top:311px;font-size:10.2px;line-height:14px;color:#2b2b2b;transform:translate(0.30px,0.70px) scaleX(0.9525);">Verantwortl...</span>
<span class="t" id="t36" style="left:34px;top:323px;font-size:10.2px;line-height:14px;color:#2b2b2b;transform:translate(0.30px,0.90px) scaleX(0.9462);">(vertikal)</span>
<span class="t" id="t37" style="left:125px;top:311px;font-size:10.2px;line-height:14px;color:#2b2b2b;transform:translate(0.20px,0.70px) scaleX(0.9213);">Trennzeichen</span>
<span class="t" id="t38" style="left:125px;top:323px;font-size:10.2px;line-height:14px;color:#2b2b2b;transform:translate(0.20px,0.90px) scaleX(0.9333);">(vertikal)</span>
<span class="t" id="t39" style="left:310px;top:262px;font-size:16.4px;line-height:22px;color:#ffffff;transform:translate(0.50px,0.60px) scaleX(1.0106);-webkit-text-stroke:0.3px #fff;">Ablauf</span>
<span class="t" id="t40" style="left:354px;top:297px;font-size:12.4px;line-height:17px;color:#ffffff;transform:translate(0.50px,0.80px) scaleX(1.0013);-webkit-text-stroke:0.25px #fff;">Bemerkungen</span>
<span class="t" id="t41" style="left:590px;top:297px;font-size:12.4px;line-height:17px;color:#ffffff;transform:translate(0.00px,0.80px) scaleX(1.0566);-webkit-text-stroke:0.25px #fff;">Verfahren</span>
<span class="t" id="t42" style="left:800px;top:297px;font-size:12.4px;line-height:17px;color:#ffffff;transform:translate(0.00px,0.80px) scaleX(1.0641);-webkit-text-stroke:0.25px #fff;">Verantwortlich</span>
<span class="t" id="t43" style="left:221px;top:536px;font-size:10px;line-height:13px;color:#2a3668;font-weight:700;transform:translate(0.50px,0.30px) scaleX(0.9632);">Zeichenblatt-1</span>
<span class="t" id="t44" style="left:311px;top:536px;font-size:10.2px;line-height:14px;color:#2b2b2b;transform:translate(0.50px,0.20px) scaleX(0.9412);">Alle</span>
<span class="t" id="t45" style="left:5px;top:560px;font-size:10.2px;line-height:14px;color:#2b2b2b;transform:translate(0.00px,0.80px) scaleX(0.9036);">Zeichenbl. 1 von 1</span>
<span class="t" id="t46" style="left:95px;top:560px;font-size:10.2px;line-height:14px;color:#2b2b2b;transform:translate(0.00px,0.80px) scaleX(0.9029);">Deutsch (Deutschland)</span>
<span class="t" id="t47" style="left:948px;top:560px;font-size:10.2px;line-height:14px;color:#2b2b2b;transform:translate(0.00px,0.80px) scaleX(0.7931);">106 %</span>
<svg class="abs" style="left:0;top:0" width="1024" height="576" viewBox="0 0 1024 576"><path d="M643.2 33.400v13l3-2.800 2.100 4.700 1.700-.8-2-4.600h4.200z" fill="#ffffff" stroke="#111" stroke-width=".9" stroke-linejoin="round"/></svg>
</body></html>
